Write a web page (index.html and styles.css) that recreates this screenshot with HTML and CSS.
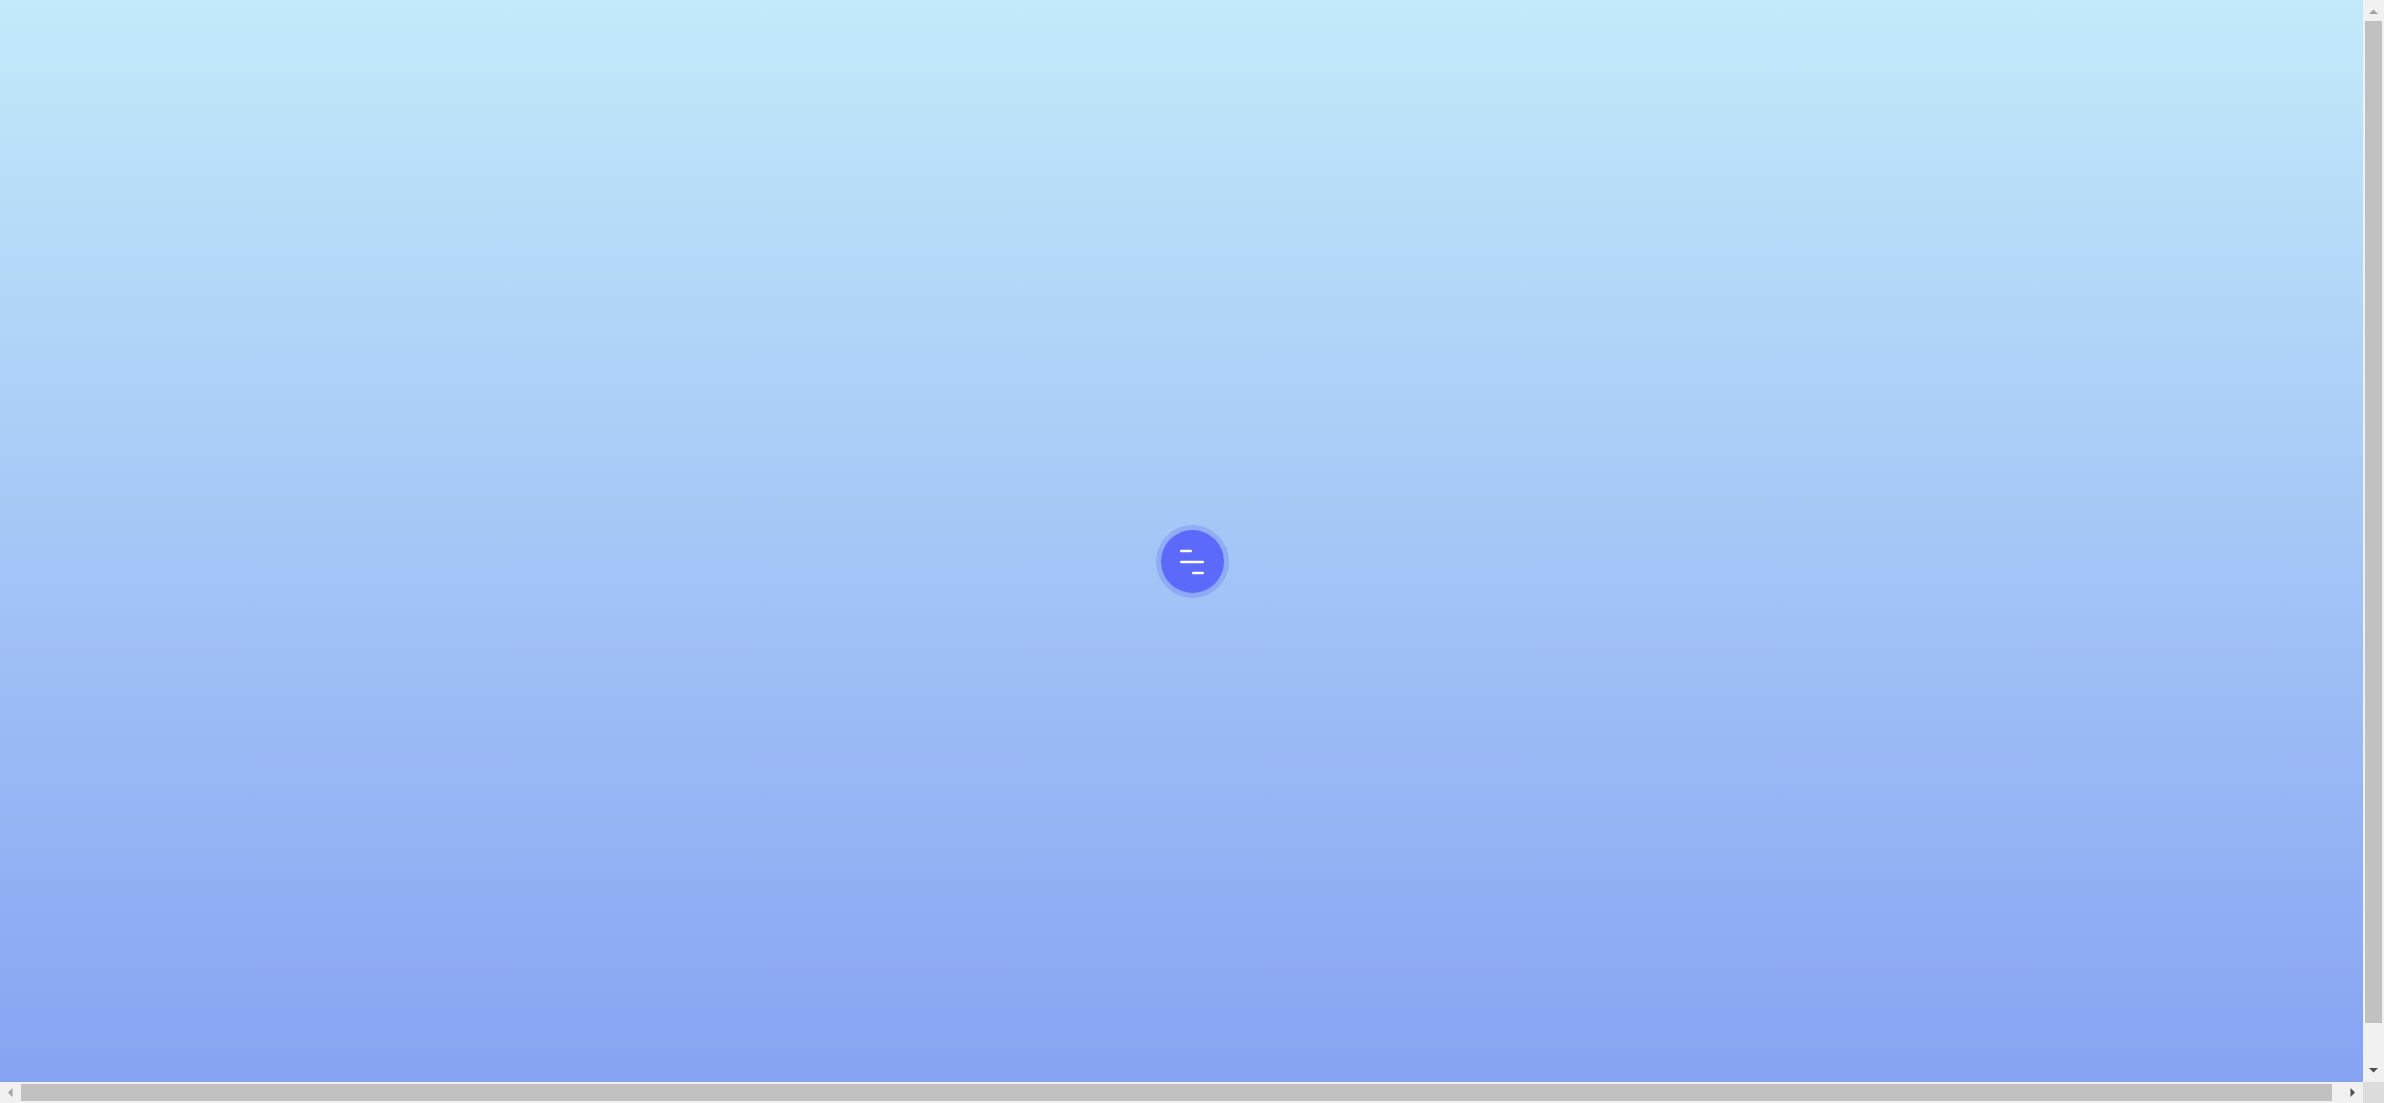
FILE: index.html
```html
<!DOCTYPE html>
<html lang="en">
<head>
<meta charset="utf-8">
<title>Menu</title>
<link rel="stylesheet" href="styles.css">
</head>
<body>
<main class="stage">
  <button class="menu-btn" type="button" aria-label="Open menu">
    <svg class="menu-icon" width="26" height="26" viewBox="0 0 26 26" fill="none" stroke="#ffffff" stroke-width="2.6" stroke-linecap="round">
      <path d="M2.3 2H11.7"/>
      <path d="M2.3 13H23.7"/>
      <path d="M14.3 24H23.7"/>
    </svg>
  </button>
</main>

<div class="sb sb-v" aria-hidden="true">
  <div class="sb-btn">
    <svg width="21" height="21" viewBox="0 0 21 21"><polygon points="6,14 15,14 10.5,9.5" fill="#a3a3a3"/></svg>
  </div>
  <div class="sb-track sb-track-v"><div class="sb-thumb sb-thumb-v"></div></div>
  <div class="sb-btn">
    <svg width="21" height="21" viewBox="0 0 21 21"><polygon points="6,7 15,7 10.5,11.5" fill="#505050"/></svg>
  </div>
</div>

<div class="sb sb-h" aria-hidden="true">
  <div class="sb-btn">
    <svg width="21" height="21" viewBox="0 0 21 21"><polygon points="12.5,6 12.5,15 8,10.5" fill="#a3a3a3"/></svg>
  </div>
  <div class="sb-track sb-track-h"><div class="sb-thumb sb-thumb-h"></div></div>
  <div class="sb-btn">
    <svg width="21" height="21" viewBox="0 0 21 21"><polygon points="8.5,6 8.5,15 13,10.5" fill="#505050"/></svg>
  </div>
</div>

<div class="sb-corner" aria-hidden="true"></div>
</body>
</html>
```

FILE: styles.css
```css
html, body {
  margin: 0;
  padding: 0;
}

body {
  font-family: "Liberation Sans", Arial, sans-serif;
}

.stage {
  width: 100vw;
  height: calc(100vh + 20px);
  display: flex;
  align-items: center;
  justify-content: center;
  background: linear-gradient(180deg, #c3eafa 0%, #84a0f2 100%);
}

.menu-btn {
  width: 63px;
  height: 63px;
  border: none;
  border-radius: 50%;
  padding: 0;
  background: #5b6afa;
  box-shadow: 0 0 0 5px rgba(96, 112, 246, 0.3);
  display: flex;
  align-items: center;
  justify-content: center;
  cursor: pointer;
}

.menu-icon {
  display: block;
}

/* classic browser scrollbars drawn over the page */
.sb {
  position: fixed;
  display: flex;
  background: #f1f1f1;
  z-index: 10;
}

.sb-v {
  top: 0;
  right: 0;
  width: 21px;
  height: calc(100vh - 21px);
  flex-direction: column;
}

.sb-h {
  left: 0;
  bottom: 0;
  height: 21px;
  width: calc(100vw - 21px);
  flex-direction: row;
}

.sb-btn {
  flex: 0 0 21px;
  width: 21px;
  height: 21px;
}

.sb-btn svg {
  display: block;
}

.sb-track {
  flex: 1;
  display: flex;
}

.sb-track-v {
  flex-direction: column;
  padding: 0 2px;
}

.sb-track-h {
  flex-direction: row;
  padding: 2px 0;
}

.sb-thumb {
  background: #c1c1c1;
}

.sb-thumb-v {
  height: 1002px;
}

.sb-thumb-h {
  width: 2311px;
}

.sb-corner {
  position: fixed;
  right: 0;
  bottom: 0;
  width: 21px;
  height: 21px;
  background: #dcdcdc;
  z-index: 10;
}
```
